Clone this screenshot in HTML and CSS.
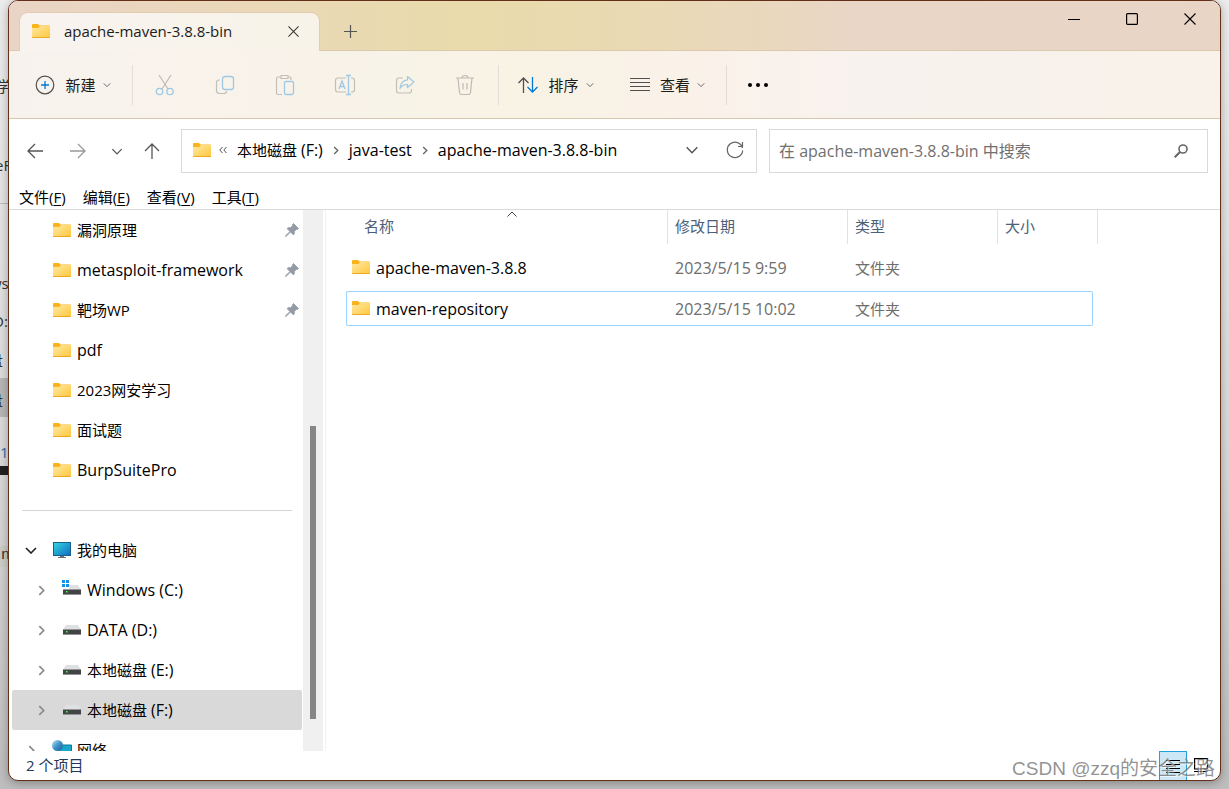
FILE: index.html
```html
<!DOCTYPE html>
<html lang="zh-CN">
<head>
<meta charset="utf-8">
<meta name="viewport" content="width=device-width, initial-scale=1">
<title>apache-maven-3.8.8-bin</title>
<link rel="stylesheet" href="styles.css">
</head>
<body>
<svg class="defs" width="0" height="0" aria-hidden="true">
  <defs>
    <linearGradient id="gold" x1="0" y1="0" x2="1" y2="1"><stop offset="0" stop-color="#ffe9a3"/><stop offset="1" stop-color="#ffc73d"/></linearGradient>
    <linearGradient id="screen" x1="0" y1="0" x2="1" y2="1"><stop offset="0" stop-color="#35d6e0"/><stop offset="1" stop-color="#0f6cc0"/></linearGradient>
    <linearGradient id="globe" x1="0" y1="0" x2="1" y2="1"><stop offset="0" stop-color="#c4e4f4"/><stop offset=".5" stop-color="#3c93c8"/><stop offset="1" stop-color="#1b5d92"/></linearGradient>
    <symbol id="folder" viewBox="0 0 18 14"><path d="M0 1Q0 0 1 0H6L7.500 1.500H17Q18 1.500 18 2.500V5H0Z" fill="#f9b41b"/><path d="M0 4H6.500L8 2H18V13Q18 14 17 14H1Q0 14 0 13Z" fill="url(#gold)"/><path d="M0 13Q0 14 1 14H17Q18 14 18 13Z" fill="#eda921"/></symbol>
    <symbol id="drive" viewBox="0 0 18 10"><path d="M3 0H15L18 5H0Z" fill="#dfe0e3"/><path d="M0 4H18V10H0Z" fill="#919396"/><path d="M0 5H18V9H0Z" fill="#444"/><rect x="3" y="6" width="1.500" height="1.500" fill="#4f5"/></symbol>
    <symbol id="pin" viewBox="0 0 14 14"><path d="M8.500 .5 13.500 5.500 12.500 6.500 11.500 6.200 9.300 8.500Q9.800 10.500 8.500 12L5.500 9 1.200 13.200 .5 13.500 .8 12.600 5 8.500 2 5.500Q3.500 4.200 5.500 4.700L7.800 2.500 7.500 1.500Z" fill="#929ba3" stroke="#929ba3" stroke-width=".8"/></symbol>
    <symbol id="chev-down" viewBox="0 0 10 6"><path d="M1 1 5 5 9 1" fill="none" stroke="currentColor" stroke-width="1.100"/></symbol>
    <symbol id="chev-right" viewBox="0 0 6 10"><path d="M1 1 5 5 1 9" fill="none" stroke="currentColor" stroke-width="1.500"/></symbol>
    <symbol id="cross" viewBox="0 0 12 12"><path d="M.5 .5 11.500 11.500M11.500 .5 .5 11.500" stroke="currentColor" stroke-width="1.100"/></symbol>
  </defs>
</svg>

<div class="backdrop" aria-hidden="true">
  <i class="rule"></i><i class="band"></i><i class="bar"></i><i class="cell"></i>
  <span class="peek p1">学</span><span class="peek p2">eF</span><span class="peek p3">ws</span><span class="peek p4">D:</span><span class="peek p5">盘</span><span class="peek p6">盘</span><span class="peek p7">1</span><span class="peek p8">n</span>
</div>

<main class="window">
  <header class="titlebar">
    <div class="tab">
      <svg class="folder"><use href="#folder"/></svg>
      <span class="tab-title">apache-maven-3.8.8-bin</span>
      <button class="tab-close" aria-label="关闭标签页"><svg width="11" height="11"><use href="#cross"/></svg></button>
    </div>
    <button class="tab-add" aria-label="新标签页"><svg width="13" height="13" viewBox="0 0 13 13"><path d="M6.500 0V13M0 6.500H13" stroke="#555" stroke-width="1.200"/></svg></button>
    <div class="caption">
      <button aria-label="最小化"><svg width="12" height="12"><path d="M0 6.500H12" stroke="#000"/></svg></button>
      <button aria-label="最大化"><svg width="12" height="12"><rect x=".6" y=".6" width="10.800" height="10.800" rx="1" fill="none" stroke="#000" stroke-width="1.200"/></svg></button>
      <button aria-label="关闭"><svg width="12" height="12"><use href="#cross"/></svg></button>
    </div>
  </header>

  <div class="toolbar">
    <button class="tool new"><svg width="20" height="20" viewBox="0 0 20 20" fill="none"><circle cx="10" cy="10" r="8.800" stroke="#505050" stroke-width="1.200"/><path d="M10 6V14M6 10H14" stroke="#0078d4" stroke-width="1.300"/></svg><span>新建</span><svg class="caret"><use href="#chev-down"/></svg></button>
    <i class="divider"></i>
    <div class="icons">
      <button aria-label="剪切"><svg width="20" height="22" viewBox="0 0 20 22" fill="none"><path d="M4 1 13 15M16 1 7 15" stroke="#bdbab5" stroke-width="1.200"/><circle cx="4.500" cy="17.500" r="3.200" stroke="#9fc8e4" stroke-width="1.300"/><circle cx="15" cy="17.500" r="3.200" stroke="#9fc8e4" stroke-width="1.300"/></svg></button>
      <button aria-label="复制"><svg width="20" height="20" viewBox="0 0 20 20" fill="none"><path d="M5 5H4Q1.500 5 1.500 7.500V15.500Q1.500 18.500 4.500 18.500H9Q11.500 18.500 11.500 16" stroke="#c2bfb9" stroke-width="1.200"/><rect x="7.500" y="1.500" width="11" height="13" rx="2.500" stroke="#9fc8e4" stroke-width="1.300"/></svg></button>
      <button aria-label="粘贴"><svg width="20" height="22" viewBox="0 0 20 22" fill="none"><path d="M6 3H3Q1.500 3 1.500 4.500V19Q1.500 20.500 3 20.500H7M13 3H15Q16 3 16 4.500V6M6 1.500H13V4.500H6Z" stroke="#c2bfb9" stroke-width="1.200" stroke-linejoin="round"/><rect x="9.500" y="7.500" width="9" height="13" rx="1.500" stroke="#9fc8e4" stroke-width="1.300"/></svg></button>
      <button aria-label="重命名"><svg width="22" height="22" viewBox="0 0 22 22" fill="none"><path d="M12 4H4Q1.500 4 1.500 6.500V15.500Q1.500 18 4 18H12M17 4H18Q20.500 4 20.500 6.500V15.500Q20.500 18 18 18H17" stroke="#c2bfb9" stroke-width="1.200"/><path d="M5 15 8 7 11 15M6 12.500H10M14.500 1.500V20.500M12 1.500H17M12 20.500H17" stroke="#9fc8e4" stroke-width="1.300"/></svg></button>
      <button aria-label="共享"><svg width="20" height="20" viewBox="0 0 20 20" fill="none"><path d="M8 3H4Q1.500 3 1.500 5.500V15.500Q1.500 18 4 18H14Q16.500 18 16.500 15.500V14" stroke="#c2bfb9" stroke-width="1.200"/><path d="M12.500 1.500 19 7 12.500 12.500V9.500Q8 9.300 5 13.500Q6 5.500 12.500 4.800Z" stroke="#9fc8e4" stroke-width="1.200" stroke-linejoin="round"/></svg></button>
      <button aria-label="删除"><svg width="20" height="22" viewBox="0 0 20 22" fill="none"><path d="M1 4H19M7 4Q7 1.500 10 1.500T13 4M3 4 4.500 18.500Q4.800 20.500 6.500 20.500H13.500Q15.200 20.500 15.500 18.500L17 4M8 9V15.500M12 9V15.500" stroke="#bdbab5" stroke-width="1.200"/></svg></button>
    </div>
    <i class="divider"></i>
    <button class="tool sort"><svg width="20" height="16" viewBox="0 0 20 16" fill="none"><path d="M5.500 16V1M.5 6 5.500 1 10.500 6" stroke="#505050" stroke-width="1.300"/><path d="M14.500 0V15M9.500 10 14.500 15 19.500 10" stroke="#0078d4" stroke-width="1.300"/></svg><span>排序</span><svg class="caret"><use href="#chev-down"/></svg></button>
    <button class="tool view"><svg width="20" height="14" viewBox="0 0 20 14"><path d="M0 .5H20M0 4.500H20M0 8.500H20M0 12.500H20" stroke="#505050" stroke-width="1.200"/></svg><span>查看</span><svg class="caret"><use href="#chev-down"/></svg></button>
    <i class="divider"></i>
    <button class="more" aria-label="更多"><svg width="20" height="4"><circle cx="2" cy="2" r="2"/><circle cx="10" cy="2" r="2"/><circle cx="18" cy="2" r="2"/></svg></button>
  </div>

  <div class="navbar">
    <div class="history">
      <button aria-label="后退"><svg width="16" height="16" viewBox="0 0 16 16" fill="none"><path d="M16 8H1M8 1 1 8 8 15" stroke="#555" stroke-width="1.300"/></svg></button>
      <button aria-label="前进"><svg width="16" height="16" viewBox="0 0 16 16" fill="none"><path d="M0 8H15M8 1 15 8 8 15" stroke="#999" stroke-width="1.300"/></svg></button>
      <button class="narrow" aria-label="最近的位置"><svg width="12" height="7" class="dim"><use href="#chev-down"/></svg></button>
      <button class="narrow" aria-label="上移"><svg width="16" height="16" viewBox="0 0 16 16" fill="none"><path d="M8 16V1M1 8 8 1 15 8" stroke="#555" stroke-width="1.300"/></svg></button>
    </div>
    <nav class="address" aria-label="地址">
      <svg class="folder"><use href="#folder"/></svg>
      <svg class="skip" width="8" height="8" viewBox="0 0 8 8" fill="none"><path d="M3.500 1 .8 4 3.500 7M7.500 1 4.800 4 7.500 7" stroke="#555"/></svg>
      <a href="#f">本地磁盘 <span class="latin">(F:)</span></a>
      <svg class="sep"><use href="#chev-right"/></svg>
      <a href="#java" class="latin">java-test</a>
      <svg class="sep"><use href="#chev-right"/></svg>
      <a href="#bin" class="latin">apache-maven-3.8.8-bin</a>
      <button class="drop" aria-label="以前的位置"><svg width="14" height="8" class="dim"><use href="#chev-down"/></svg></button>
      <button aria-label="刷新"><svg width="18" height="18" viewBox="0 0 18 18" fill="none"><path d="M16.500 7A7.700 7.700 0 1 0 16.700 9.500M16.500 1V5.500H12" stroke="#666" stroke-width="1.200"/></svg></button>
    </nav>
    <label class="search">
      <input type="text" aria-label="搜索" placeholder="在 apache-maven-3.8.8-bin 中搜索">
      <svg width="14" height="14" viewBox="0 0 14 14" fill="none"><circle cx="9" cy="5" r="4" stroke="#666" stroke-width="1.600"/><path d="M6 8 .7 13.300" stroke="#666" stroke-width="2"/></svg>
    </label>
  </div>

  <nav class="menubar" aria-label="菜单">
    <button>文件(<u>F</u>)</button><button>编辑(<u>E</u>)</button><button>查看(<u>V</u>)</button><button>工具(<u>T</u>)</button>
  </nav>

  <div class="content">
    <aside class="sidebar">
      <ul class="tree">
        <li><svg class="folder"><use href="#folder"/></svg><a href="#1">漏洞原理</a><svg class="pin"><use href="#pin"/></svg></li>
        <li><svg class="folder"><use href="#folder"/></svg><a href="#2" class="latin">metasploit-framework</a><svg class="pin"><use href="#pin"/></svg></li>
        <li><svg class="folder"><use href="#folder"/></svg><a href="#3">靶场WP</a><svg class="pin"><use href="#pin"/></svg></li>
        <li><svg class="folder"><use href="#folder"/></svg><a href="#4" class="latin">pdf</a></li>
        <li><svg class="folder"><use href="#folder"/></svg><a href="#5">2023网安学习</a></li>
        <li><svg class="folder"><use href="#folder"/></svg><a href="#6">面试题</a></li>
        <li><svg class="folder"><use href="#folder"/></svg><a href="#7" class="latin">BurpSuitePro</a></li>
        <li class="gap"><hr></li>
        <li class="root"><button aria-label="折叠"><svg width="12" height="7" viewBox="0 0 12 7" fill="none"><path d="M1 1 6 6 11 1" stroke="#222" stroke-width="1.600"/></svg></button><svg width="18" height="16" viewBox="0 0 18 16"><rect x=".5" y=".5" width="17" height="13" fill="url(#screen)" stroke="#17608e"/><path d="M7 14H11V15H13V16H5V15H7Z" fill="#66727c"/></svg><a href="#pc">我的电脑</a></li>
        <li class="disk"><button aria-label="展开"><svg width="7" height="11"><use href="#chev-right"/></svg></button><svg class="system" width="20" height="16" viewBox="0 0 20 16"><path d="M8 5H17L20 10H8Z" fill="#dfe0e3"/><path d="M2 9H20V15H2Z" fill="#919396"/><path d="M2 10H20V14H2Z" fill="#444"/><rect x="5" y="11" width="1.500" height="1.500" fill="#4f5"/><path d="M1 0H4V3H1ZM5 0H8V3H5ZM1 4H4V7H1ZM5 4H8V7H5Z" fill="#1593e6"/></svg><a href="#c" class="latin">Windows (C:)</a></li>
        <li class="disk"><button aria-label="展开"><svg width="7" height="11"><use href="#chev-right"/></svg></button><svg class="drive"><use href="#drive"/></svg><a href="#d" class="latin">DATA (D:)</a></li>
        <li class="disk"><button aria-label="展开"><svg width="7" height="11"><use href="#chev-right"/></svg></button><svg class="drive"><use href="#drive"/></svg><a href="#e">本地磁盘 <span class="latin">(E:)</span></a></li>
        <li class="disk current"><button aria-label="展开"><svg width="7" height="11"><use href="#chev-right"/></svg></button><svg class="drive"><use href="#drive"/></svg><a href="#f">本地磁盘 <span class="latin">(F:)</span></a></li>
        <li class="root net"><button aria-label="展开"><svg width="7" height="11"><use href="#chev-right"/></svg></button><svg width="20" height="20" viewBox="0 0 20 20"><path d="M7 5H19.500V16H7Z" fill="#17a7cb" stroke="#087b9e"/><circle cx="5.500" cy="5.500" r="5.500" fill="url(#globe)"/></svg><a href="#net">网络</a></li>
      </ul>
      <div class="scroll"><div class="thumb"></div></div>
    </aside>

    <section class="files">
      <table>
        <colgroup><col class="c-name"><col class="c-date"><col class="c-type"><col class="c-size"><col class="c-end"></colgroup>
        <thead><tr><th class="name">名称<svg class="asc" width="10" height="6" viewBox="0 0 10 6" fill="none"><path d="M.5 5.500 5 1 9.500 5.500" stroke="#444"/></svg></th><th>修改日期</th><th>类型</th><th colspan="2">大小</th></tr></thead>
        <tbody>
          <tr><td class="name"><svg class="folder"><use href="#folder"/></svg><span class="latin">apache-maven-3.8.8</span></td><td class="latin">2023/5/15 9:59</td><td>文件夹</td><td></td></tr>
          <tr class="focused"><td class="name"><svg class="folder"><use href="#folder"/></svg><span class="latin">maven-repository</span></td><td class="latin">2023/5/15 10:02</td><td>文件夹</td><td></td></tr>
        </tbody>
      </table>
    </section>
  </div>

  <footer class="status">
    <span class="count">2 个项目</span>
    <button class="mode on" aria-label="详细信息"><svg width="14" height="15" viewBox="0 0 14 15"><path d="M0 1.500H14M0 5.500H14M0 9.500H14M0 13.500H14" stroke="#000"/></svg></button>
    <button class="mode" aria-label="大图标"><svg width="14" height="15" viewBox="0 0 14 15" fill="none"><path d="M.6 .6H13.400V11H.6ZM0 13.500H14" stroke="#000" stroke-width="1.200"/></svg></button>
  </footer>
</main>
<div class="watermark">CSDN @zzq的安全之路</div>
</body>
</html>
```
FILE: styles.css
```css
* { box-sizing: border-box; }
body {
  margin: 0;
  height: 100vh;
  overflow: hidden;
  padding: 0 8px 8px;
  position: relative;
  background: linear-gradient(#ececec, #d8d8d8 60%, #bdbdbd);
  font: 15px/20px "Open Sans", "Noto Sans CJK SC", sans-serif;
  color: #000;
}
button { padding: 0; border: 0; background: none; font: inherit; color: inherit; display: flex; align-items: center; justify-content: center; }
a { color: inherit; text-decoration: none; }
svg { flex: none; display: block; }
.defs { position: absolute; }
.latin { font-size: 16px; }
.folder { width: 18px; height: 14px; }

.backdrop { position: absolute; left: 0; top: 0; bottom: 0; width: 8px; overflow: hidden; color: #333; }
.backdrop i, .peek { position: absolute; }
.backdrop i { left: 0; right: 0; }
.rule { top: 203px; height: 1px; background: #bbb; }
.band { top: 378px; height: 39px; background: #b7b7b7; }
.bar { top: 466px; height: 9px; background: #202020; }
.cell { top: 546px; height: 21px; background: #ccccc6; }
.p1 { left: -4px; top: 76px; }
.p2 { left: -5px; top: 155px; }
.p3 { left: -10px; top: 273px; }
.p4 { left: -7px; top: 311px; }
.p5 { left: -12px; top: 350px; }
.p6 { left: -12px; top: 390px; }
.p7 { left: 0; top: 442px; color: #2d6da3; }
.p8 { left: 1px; top: 546px; font-family: "Liberation Mono", monospace; }

.window {
  position: relative;
  height: 100%;
  display: flex;
  flex-direction: column;
  overflow: hidden;
  background: #fff;
  border: 1px solid #64301a;
  border-radius: 10px;
  box-shadow: 0 2px 10px rgba(0, 0, 0, .3);
}
.titlebar {
  display: flex;
  align-items: flex-end;
  height: 50px;
  padding-left: 10px;
  border-bottom: 1px solid #dcc8ac;
  background: linear-gradient(90deg, #e9d4c6, #ead8b8 20%, #e9dbab 38%, #ead9b6 55%, #e9d6c6 70%, #e9d5c5);
}
.tab {
  display: flex;
  align-items: center;
  width: 301px;
  height: 39px;
  margin-bottom: -1px;
  padding: 0 20px 2px 12px;
  border: 1px solid #e2cdb2;
  border-bottom: 0;
  border-radius: 9px 9px 0 0;
  background: linear-gradient(90deg, #f8f3ef, #f8f3e8);
}
.tab-title { flex: 1; margin-left: 14px; font-weight: 500; color: #1c1c1c; }
.tab-close { color: #333; }
.tab-add { width: 61px; height: 38px; }
.caption { display: flex; margin-left: auto; align-self: flex-start; padding-right: 1px; }
.caption button { width: 58px; height: 36px; }

.toolbar {
  display: flex;
  align-items: center;
  height: 68px;
  border-bottom: 1px solid #d9c6ac;
  background: linear-gradient(90deg, #f8f2ee, #f8f3e8 30%, #f8f3e5 42%, #faf1e8 55%, #f8f2ee 70%, #f8f2ea);
  color: #1c1c1c;
}
.divider { width: 1px; height: 40px; background: #e3ddd6; }
.tool { height: 40px; gap: 10px; }
.tool .caret { width: 8px; height: 6px; margin-left: -3px; color: #555; }
.new { width: 123px; padding-left: 5px; }
.icons { display: flex; padding: 0 3px 0 2px; }
.icons button { width: 60px; height: 40px; }
.sort { width: 114px; }
.view { width: 113px; padding-right: 4px; }
.more { width: 61px; height: 40px; }

.navbar { display: grid; grid-template-columns: 151px minmax(0, 576fr) minmax(0, 439fr); height: 64px; padding: 10px 12px 10px 9px; gap: 12px; }
.history { display: flex; align-items: center; }
.history button { width: 44px; height: 36px; margin-left: -4px; }
.history button + button { margin-left: 0; }
.history .narrow { width: 36px; }
.dim { color: #555; }
.address, .search { display: flex; align-items: center; border: 1px solid #d9d9d9; background: #fff; }
.address { padding: 0 12px 2px 11px; white-space: nowrap; }
.skip { margin: 0 10px 0 8px; }
.sep { width: 6px; height: 9px; margin: 0 10px; color: #666; }
.drop { margin: 0 27px 0 auto; }
.search { padding: 0 19px 0 9px; }
.search input { flex: 1; min-width: 0; border: 0; padding: 0; outline: 0; background: none; font: inherit; font-size: 16px; }
.search input::placeholder { color: #707070; opacity: 1; }

.menubar { display: flex; gap: 17px; height: 27px; padding: 4px 10px 0; border-bottom: 1px solid #dadada; }
.menubar button { height: 20px; }
.menubar u { text-underline-offset: 2px; }

.content { flex: 1; min-height: 0; display: flex; }
.sidebar { display: flex; width: 317px; border-right: 1px solid #f2f2f2; }
.tree { flex: 1; min-width: 0; margin: 0; padding: 0 1px 0 3px; list-style: none; overflow: hidden; }
.tree li { display: flex; align-items: center; height: 40px; padding: 0 3px 0 41px; border-radius: 2px; }
.tree a { margin-left: 6px; white-space: nowrap; }
.pin { width: 14px; height: 14px; margin-left: auto; }
.tree .gap { padding: 0 10px; }
hr { flex: 1; margin: 0; border: 0; border-top: 1px solid #d5d5d5; }
.tree .root { padding-left: 12px; }
.root button { width: 14px; height: 20px; margin-right: 15px; color: #888; }
.tree .net { padding-left: 12px; }
.net button { margin-right: 14px; }
.tree .net a { margin-left: 5px; }
.tree .disk { padding-left: 22px; }
.disk button { width: 14px; height: 20px; margin-right: 15px; color: #888; }
.disk .drive { width: 18px; height: 10px; }
.disk .system { margin-left: -2px; margin-bottom: 4px; }
.tree .current { background: #d9d9d9; }
.scroll { width: 20px; margin-right: 2px; padding: 216px 7px 0; background: #f0f0f0; }
.thumb { height: 293px; background: #868686; }

.files { flex: 1; min-width: 0; padding-left: 20px; overflow: hidden; }
table { width: 752px; margin-top: -6px; table-layout: fixed; border-collapse: separate; border-spacing: 0 6px; }
.c-name { width: 322px; }
.c-date { width: 180px; }
.c-type { width: 150px; }
.c-size { width: 95px; }
.c-end { width: 5px; }
th { height: 34px; padding: 0 7px 2px; border-right: 1px solid #e2e2e2; text-align: left; font-weight: 400; color: #4c607a; position: relative; }
th.name { padding-left: 18px; }
.asc { position: absolute; left: 161px; top: 1px; }
td { height: 35px; padding: 0 7px; border: 0 solid transparent; border-width: 1px 0; color: #6d6d6d; vertical-align: middle; }
td.name { padding-left: 6px; color: #000; }
td.name svg { display: inline-block; margin-right: 6px; }
.focused td { border-color: #99d1ff; }
.focused td:first-child { border-left-width: 1px; padding-left: 5px; border-radius: 2px 0 0 2px; }
.focused td:last-child { border-right-width: 1px; border-radius: 0 2px 2px 0; }

.status { display: flex; align-items: center; height: 29px; padding-right: 5px; color: #1e395b; }
.count { flex: 1; padding: 0 0 2px 17px; }
.mode { width: 28px; height: 29px; }
.mode.on { background: #cce8f6; border: 1px solid #26a0da; border-bottom: 0; }

.watermark {
  position: absolute;
  right: 14px;
  bottom: 8px;
  font: 18px/24px "Liberation Sans", "Noto Sans CJK SC", sans-serif;
  font-size: 19px;
  color: rgba(110, 110, 110, .75);
  text-shadow: 1px 1px 0 rgba(255, 255, 255, .7);
  white-space: nowrap;
  pointer-events: none;
}
```
